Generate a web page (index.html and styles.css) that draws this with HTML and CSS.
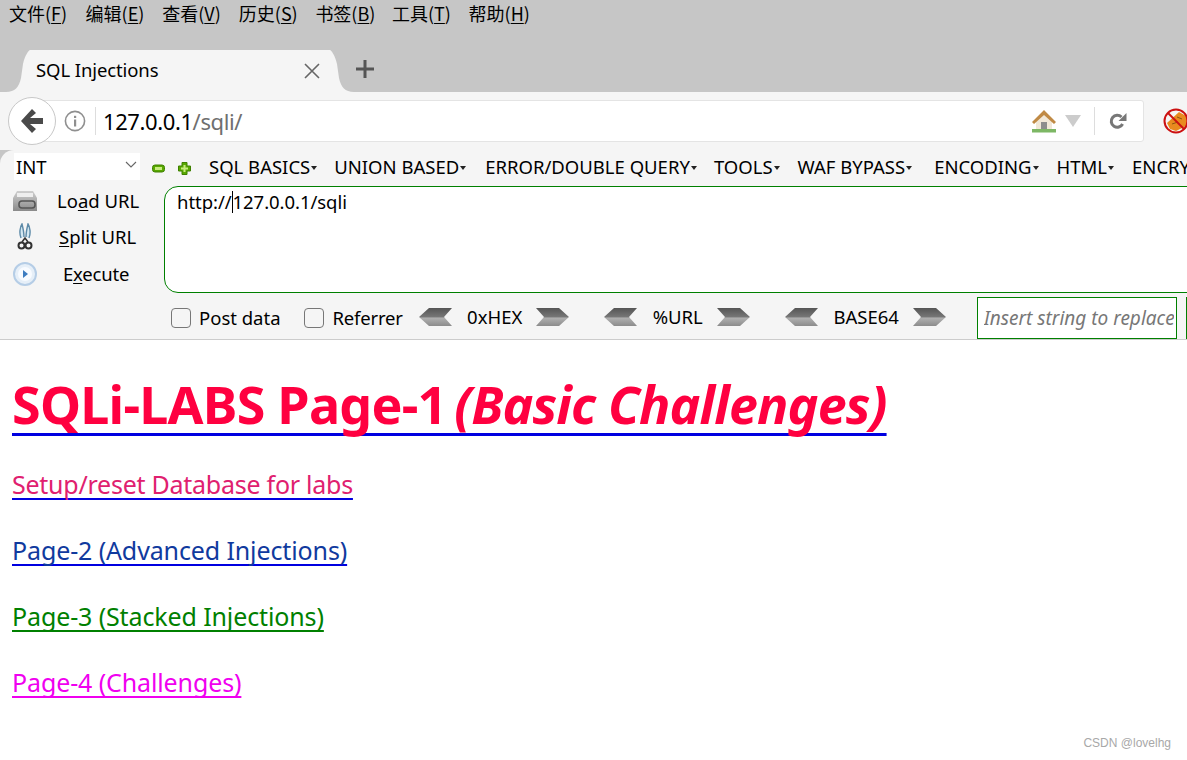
FILE: index.html
```html
<!DOCTYPE html>
<html lang="zh-CN">
<head>
<meta charset="utf-8">
<title>SQL Injections</title>
<link rel="stylesheet" href="styles.css">
</head>
<body>
<div class="chrome">
  <nav class="menubar">
    <span class="menu-item">文件(<u>F</u>)</span>
    <span class="menu-item">编辑(<u>E</u>)</span>
    <span class="menu-item">查看(<u>V</u>)</span>
    <span class="menu-item">历史(<u>S</u>)</span>
    <span class="menu-item">书签(<u>B</u>)</span>
    <span class="menu-item">工具(<u>T</u>)</span>
    <span class="menu-item">帮助(<u>H</u>)</span>
  </nav>
  <div class="tabstrip">
    <div class="tab">
      <svg class="tab-curve" width="24" height="42" viewBox="0 0 24 42"><path d="M0 42C9 42 13 37 15 28L17 14C19 5 23 0 24 0V42Z" fill="#f5f5f5"/></svg>
      <div class="tab-body">
        <span class="tab-title">SQL Injections</span>
        <svg class="tab-close" width="18" height="18" viewBox="0 0 18 18"><path d="M2 2L16 16M16 2L2 16" stroke="#666" stroke-width="1.6" fill="none"/></svg>
      </div>
      <svg class="tab-curve" width="24" height="42" viewBox="0 0 24 42"><path d="M24 42C15 42 11 37 9 28L7 14C5 5 1 0 0 0V42Z" fill="#f5f5f5"/></svg>
    </div>
    <svg class="newtab" width="18" height="18" viewBox="0 0 18 18"><path d="M9 0V18M0 9H18" stroke="#555" stroke-width="3"/></svg>
  </div>
  <div class="navbar">
    <button class="back">
      <svg width="22" height="24" viewBox="0 0 22 24"><path d="M11 0L0 12 11 24 15 20 9 15H22V9H9L15 4Z" fill="#4a4a4a"/></svg>
    </button>
    <div class="urlbar">
      <svg class="info" width="22" height="22" viewBox="0 0 22 22"><circle cx="11" cy="11" r="9.6" fill="none" stroke="#8f8f8f" stroke-width="1.6"/><rect x="10" y="9.5" width="2.2" height="7" fill="#8f8f8f"/><rect x="10" y="5.8" width="2.2" height="2.2" fill="#8f8f8f"/></svg>
      <span class="url-sep"></span>
      <span class="url-text">127.0.0.1<span class="url-path">/sqli/</span></span>
      <svg class="home" width="26" height="24" viewBox="0 0 26 24"><rect x="1" y="20" width="24" height="3.5" fill="#7db765"/><path d="M5 11L13 5 21 11V20H5Z" fill="#f1e8d8"/><rect x="10" y="13" width="6" height="7" fill="#8d8d8d"/><path d="M13 1L25 13 23 15 13 6 3 15 1 13Z" fill="#c08a45"/></svg>
      <svg class="drop" width="16" height="12" viewBox="0 0 16 12"><path d="M0 0H16L8 12Z" fill="#ccc"/></svg>
      <span class="url-sep2"></span>
      <svg class="reload" width="18" height="18" viewBox="0 0 18 18"><path d="M13.6 12A6 6 0 1 1 12.5 5" fill="none" stroke="#777" stroke-width="3"/><path d="M17.5 1V9H9.5Z" fill="#777"/></svg>
    </div>
    <svg class="noscript" width="26" height="26" viewBox="0 0 26 26"><path d="M4 15L16 4 25 9V17L13 23 7 21Z" fill="#e98a1f"/><path d="M9 16L15 14M14 9L19 11" stroke="#8a5510" stroke-width="1"/><circle cx="13" cy="13" r="11.5" fill="none" stroke="#cc1111" stroke-width="2"/><path d="M5 5L21 21" stroke="#cc1111" stroke-width="2"/></svg>
  </div>
  <div class="hackbar">
    <div class="hb-top">
      <div class="select">INT<svg width="12" height="7" viewBox="0 0 12 7"><path d="M1 1L6 6 11 1" fill="none" stroke="#666" stroke-width="1.1"/></svg></div>
      <svg class="pm pm-minus" width="13" height="13" viewBox="0 0 13 13"><rect x="0.5" y="3" width="12" height="7" rx="2.5" fill="#58a800" stroke="#3f8000"/><rect x="3" y="5" width="7" height="3" fill="#c6ec7e"/></svg>
      <svg class="pm pm-plus" width="13" height="13" viewBox="0 0 13 13"><path d="M4 .5H9V4H12.5V9H9V12.5H4V9H.5V4H4Z" fill="#58a800" stroke="#3f8000"/><path d="M6.5 3V10M3 6.5H10" stroke="#c6ec7e" stroke-width="2"/></svg>
      <span class="hb-menu m1">SQL BASICS<i class="caret"></i></span>
      <span class="hb-menu m2">UNION BASED<i class="caret"></i></span>
      <span class="hb-menu m3">ERROR/DOUBLE QUERY<i class="caret"></i></span>
      <span class="hb-menu m4">TOOLS<i class="caret"></i></span>
      <span class="hb-menu m5">WAF BYPASS<i class="caret"></i></span>
      <span class="hb-menu m6">ENCODING<i class="caret"></i></span>
      <span class="hb-menu m7">HTML<i class="caret"></i></span>
      <span class="hb-menu m8">ENCRYPTION<i class="caret"></i></span>
    </div>
    <div class="hb-mid">
      <div class="hb-actions">
        <div class="action">
          <svg width="26" height="24" viewBox="0 0 26 24"><defs><linearGradient id="pr" x1="0" y1="0" x2="0" y2="1"><stop offset="0" stop-color="#cfcfcf"/><stop offset="1" stop-color="#8a8a8a"/></linearGradient></defs><path d="M5 2H21L25 9V22H1V9Z" fill="url(#pr)"/><rect x="5" y="4" width="16" height="4" fill="#eee"/><rect x="7" y="12" width="16" height="7" rx="3" fill="none" stroke="#555" stroke-width="1.6"/></svg>
          <span class="action-label l1">Lo<u>a</u>d URL</span>
        </div>
        <div class="action">
          <svg width="26" height="28" viewBox="0 0 26 28"><path d="M9 15C7 10 8 4 10 1 11 5 12 9 12 14M17 15C19 10 18 4 16 1 15 5 14 9 14 14" fill="#d4e8f2" stroke="#5d8aa8" stroke-width="1.4"/><circle cx="9.5" cy="22.5" r="3" fill="none" stroke="#333" stroke-width="2"/><circle cx="16.5" cy="22.5" r="3" fill="none" stroke="#333" stroke-width="2"/><path d="M10 19L13 15 16 19" fill="none" stroke="#333" stroke-width="1.6"/></svg>
          <span class="action-label l2"><u>S</u>plit URL</span>
        </div>
        <div class="action">
          <svg width="26" height="24" viewBox="0 0 26 24"><circle cx="13" cy="12" r="11" fill="#e6eff8" stroke="#b5cde6" stroke-width="2"/><circle cx="13" cy="12" r="7" fill="#f8fbff"/><path d="M11 8L16 12 11 16Z" fill="#3d7cc0"/></svg>
          <span class="action-label l3">E<u>x</u>ecute</span>
        </div>
      </div>
      <div class="urlarea">http://<i class="text-caret"></i>127.0.0.1/sqli</div>
    </div>
    <div class="hb-bottom">
      <label class="check c1"><input type="checkbox">Post data</label>
      <label class="check c2"><input type="checkbox">Referrer</label>
      <div class="codec cd1">
        <svg width="36" height="20" viewBox="0 0 36 20"><use href="#chev-l"/></svg>
        <span>0xHEX</span>
        <svg width="36" height="20" viewBox="0 0 36 20"><use href="#chev-r"/></svg>
      </div>
      <div class="codec cd2">
        <svg width="36" height="20" viewBox="0 0 36 20"><use href="#chev-l"/></svg>
        <span>%URL</span>
        <svg width="36" height="20" viewBox="0 0 36 20"><use href="#chev-r"/></svg>
      </div>
      <div class="codec cd3">
        <svg width="36" height="20" viewBox="0 0 36 20"><use href="#chev-l"/></svg>
        <span>BASE64</span>
        <svg width="36" height="20" viewBox="0 0 36 20"><use href="#chev-r"/></svg>
      </div>
      <input class="replace" type="text" placeholder="Insert string to replace">
      <input class="replace2" type="text">
    </div>
  </div>
</div>
<main class="page">
  <h1 class="title"><a href="#">SQLi-LABS Page-1 <em>(Basic Challenges)</em></a></h1>
  <a class="link l-setup" href="#"><span>Setup/reset Database for labs</span></a>
  <a class="link l-p2" href="#"><span>Page-2 (Advanced Injections)</span></a>
  <a class="link l-p3" href="#">Page-3 (Stacked Injections)</a>
  <a class="link l-p4" href="#">Page-4 (Challenges)</a>
</main>
<div class="watermark">CSDN @lovelhg</div>
<svg class="defs" width="0" height="0">
  <defs>
    <linearGradient id="chev" x1="0" y1="0" x2="0" y2="1"><stop offset="0" stop-color="#555"/><stop offset=".5" stop-color="#777"/><stop offset=".55" stop-color="#b0b0b0"/><stop offset="1" stop-color="#8c8c8c"/></linearGradient>
    <path id="chev-l" d="M11 1H34L26 10 34 19H11L1 10Z" fill="url(#chev)"/>
    <path id="chev-r" d="M2 1H25L35 10 25 19H2L10 10Z" fill="url(#chev)"/>
  </defs>
</svg>
</body>
</html>
```
FILE: styles.css
```css
* { box-sizing: border-box; }
html, body { margin: 0; height: 760px; overflow: hidden; background: #fff; }
body { font-family: "Noto Sans", "Noto Sans CJK SC", sans-serif; color: #000; position: relative; }
u { text-underline-offset: 2px; text-decoration-thickness: 1px; }

.chrome { width: 1187px; overflow: hidden; background: #c6c6c6; }

.menubar { height: 28px; display: flex; padding-left: 9px; font-size: 18px; line-height: 26px; font-family: "Noto Sans CJK SC", sans-serif; color: #000; }
.menu-item { width: 76.6px; flex: none; white-space: nowrap; }

.tabstrip { height: 64px; padding-top: 22px; display: flex; align-items: flex-start; }
.tab { display: flex; margin-left: 6px; height: 42px; }
.tab-curve { flex: none; display: block; }
.tab-body { width: 300px; background: #f5f5f5; display: flex; align-items: center; justify-content: space-between; padding: 0 9px 0 6px; height: 42px; }
.tab-title { font-size: 18.5px; letter-spacing: -.1px; color: #000; margin-top: -4px; }
.newtab { margin: 10px 0 0 2px; flex: none; }

.navbar { height: 58px; background: #f5f5f5; display: flex; align-items: flex-start; padding: 8px 0 0 8px; }
.back { width: 48px; height: 48px; margin-top: -3px; border-radius: 50%; border: 1px solid #c8c8c8; background: #fff; padding: 0; display: flex; align-items: center; justify-content: center; flex: none; position: relative; z-index: 1; }
.urlbar { width: 1110px; margin-left: -22px; height: 42px; background: #fff; border: 1px solid #e4e4e4; border-radius: 0 3px 3px 0; display: flex; align-items: center; padding-left: 29px; flex: none; }
.info { flex: none; }
.url-sep { width: 1px; height: 28px; background: #ddd; margin: 0 7px 0 9px; flex: none; }
.url-text { font-size: 22px; letter-spacing: -.4px; width: 928px; flex: none; white-space: nowrap; color: #000; }
.url-path { color: #6f6f6f; }
.home { flex: none; }
.drop { flex: none; margin-left: 8px; }
.url-sep2 { width: 1px; height: 28px; background: #ddd; margin-left: 13px; flex: none; }
.reload { flex: none; margin-left: 14px; }
.noscript { flex: none; margin: 8px 0 0 19px; }

.hackbar { height: 190px; background: #f5f5f5; border-radius: 14px 0 0 0; border-bottom: 1px solid #ccc; }
.hb-top { height: 36px; display: flex; align-items: center; white-space: nowrap; font-size: 18.5px; padding-left: 14px; }
.select { width: 126px; height: 27px; margin-top: -3px; background: #fff; display: flex; align-items: center; justify-content: space-between; padding: 0 3px 0 2px; flex: none; font-size: 18.5px; }
.select svg { margin-top: -5px; }
.pm { flex: none; margin-top: 1px; }
.pm-minus { margin-left: 12px; }
.pm-plus { margin-left: 13px; }
.hb-menu { flex: none; margin-top: -4px; color: #000; }
.m1 { margin-left: 18px; }
.m2 { margin-left: 17px; }
.m3 { margin-left: 19px; }
.m4 { margin-left: 17px; }
.m5 { margin-left: 18px; }
.m6 { margin-left: 22px; }
.m7 { margin-left: 18px; }
.m8 { margin-left: 18px; }
.caret { display: inline-block; width: 0; height: 0; border: 3px solid transparent; border-top: 4px solid #222; border-bottom: 0; margin-left: 1px; vertical-align: 4px; }

.hb-mid { display: flex; height: 107px; }
.hb-actions { width: 164px; flex: none; padding: 1px 0 0 12px; display: flex; flex-direction: column; gap: 9.5px; }
.action { height: 27px; display: flex; align-items: center; }
.action svg { flex: none; }
.action-label { font-size: 18.5px; white-space: nowrap; }
.l1 { margin-left: 19px; }
.l2 { margin: -2px 0 0 21px; }
.l3 { margin-left: 25px; letter-spacing: -.2px; }
.urlarea { width: 1100px; flex: none; height: 107px; border: 1px solid #008000; border-radius: 14px 0 0 14px; background: #fff; padding: 2px 12px; font-size: 18.5px; letter-spacing: -.05px; }
.text-caret { display: inline-block; width: 1px; height: 22px; background: #000; vertical-align: -4px; }

.hb-bottom { height: 46px; display: flex; align-items: center; white-space: nowrap; font-size: 18.5px; padding-top: 2px; }
.check { display: flex; align-items: center; flex: none; }
.check input { appearance: none; width: 20px; height: 20px; margin: 2px 8px 0 0; border: 1px solid #777; border-radius: 4px; background: #f5f5f5; flex: none; }
.c2 input { margin-right: 9px; }
.c1 { margin-left: 171px; }
.c2 { margin-left: 23px; letter-spacing: -.2px; }
.codec { display: flex; align-items: center; flex: none; color: #000; }
.codec span { text-align: center; margin-top: -1px; padding-left: 2px; }
.codec svg { flex: none; }
.cd1 { margin-left: 15px; }
.cd1 span { width: 80px; }
.cd2 { margin-left: 33px; }
.cd2 span { width: 76px; }
.cd3 { margin-left: 33px; }
.cd3 span { width: 91px; }
.replace { width: 200px; height: 42px; margin-left: 30px; flex: none; align-self: flex-end; border: 1px solid #008000; border-radius: 0; background: #fff; padding: 0 2px 0 6px; font: italic 19px "Noto Sans", sans-serif; outline: 0; }
.replace::placeholder { color: #777; opacity: 1; }
.replace2 { width: 60px; height: 42px; margin-left: 9px; flex: none; align-self: flex-end; border: 1px solid #008000; background: #fff; }

.page { padding: 0 0 0 12px; display: flex; flex-direction: column; align-items: flex-start; }
.title { margin: 28px 0 0; font-size: 52px; line-height: 72px; font-weight: 700; letter-spacing: -.75px; white-space: nowrap; }
.title a { color: #ff0040; text-decoration: underline #0000e0 3px; text-underline-offset: 9px; text-decoration-skip-ink: none; }
.title em { font-style: italic; margin-left: -5px; letter-spacing: -.85px; }
.link { font-size: 25px; line-height: 34px; white-space: nowrap; letter-spacing: -.12px; text-decoration-thickness: 2px; text-underline-offset: 4px; text-decoration-skip-ink: none; margin-top: 32px; }
.l-setup { margin-top: 27px; letter-spacing: -.25px; color: #0000e0; }
.l-setup span { color: #e0206f; }
.l-p2 { color: #0000e0; }
.l-p2 span { color: #103a9e; }
.l-p3 { color: #008000; }
.l-p4 { color: #f000f0; }

.watermark { position: absolute; right: 16px; top: 736px; font: 12px "Liberation Sans", sans-serif; color: #a8a8a8; }
.defs { position: absolute; }
```
